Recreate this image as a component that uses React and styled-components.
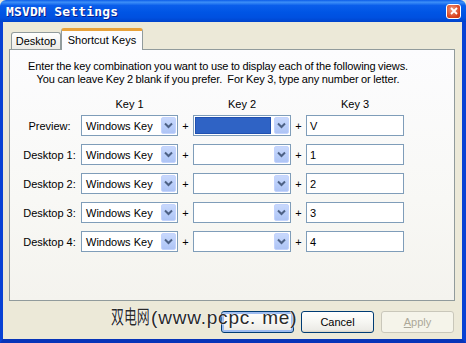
import React from "react";
import styled, { createGlobalStyle } from "styled-components";

const rows = [
  { label: "Preview:", key2Selected: true, key3: "V" },
  { label: "Desktop 1:", key3: "1" },
  { label: "Desktop 2:", key3: "2" },
  { label: "Desktop 3:", key3: "3" },
  { label: "Desktop 4:", key3: "4" },
];

function Chevron() {
  return (
    <svg width="9" height="7" viewBox="0 0 9 7">
      <polyline
        points="1,1.5 4.5,5 8,1.5"
        fill="none"
        stroke="#4D6185"
        strokeWidth="2"
      />
    </svg>
  );
}

function CloseIcon() {
  return (
    <svg width="8" height="8" viewBox="0 0 8 8">
      <path d="M1 1 L7 7 M7 1 L1 7" stroke="#fff" strokeWidth="1.8" />
    </svg>
  );
}

function Combo({ value, selected }) {
  return (
    <ComboBox>
      <ComboValue selected={selected}>{value}</ComboValue>
      <DropButton>
        <Chevron />
      </DropButton>
    </ComboBox>
  );
}

export default function App() {
  return (
    <>
      <GlobalStyle />
      <Window>
        <TitleBar>
          <Title>MSVDM Settings</Title>
          <CloseButton>
            <CloseIcon />
          </CloseButton>
        </TitleBar>
        <Frame>
          <Tabs>
            <Tab>Desktop</Tab>
            <Tab active>Shortcut Keys</Tab>
          </Tabs>
          <Panel>
            <Intro>
              Enter the key combination you want to use to display each of the
              following views.
              <br />
              You can leave Key 2 blank if you prefer.&nbsp; For Key 3, type any
              number or letter.
            </Intro>
            <HeaderGrid>
              <span />
              <ColHead>Key 1</ColHead>
              <span />
              <ColHead>Key 2</ColHead>
              <span />
              <ColHead>Key 3</ColHead>
            </HeaderGrid>
            <KeyGrid>
              {rows.map((r) => (
                <React.Fragment key={r.label}>
                  <RowLabel>{r.label}</RowLabel>
                  <Combo value="Windows Key" />
                  <Plus>+</Plus>
                  <Combo value="" selected={r.key2Selected} />
                  <Plus>+</Plus>
                  <TextBox>{r.key3}</TextBox>
                </React.Fragment>
              ))}
            </KeyGrid>
          </Panel>
          <ButtonRow>
            <Button focused />
            <Button>Cancel</Button>
            <Button disabled>
              <u>A</u>pply
            </Button>
          </ButtonRow>
          <Watermark>
            <Cjk>双电网</Cjk>(www.pcpc. me)
          </Watermark>
        </Frame>
      </Window>
    </>
  );
}

const GlobalStyle = createGlobalStyle`
  html, body {
    margin: 0;
    padding: 0;
    background: #ECE9D8;
  }
  body {
    font-family: "Liberation Sans", Tahoma, sans-serif;
    font-size: 11px;
    color: #000;
  }
`;

const Window = styled.div`
  width: 466px;
  height: 343px;
  display: flex;
  flex-direction: column;
  background: #ECE9D8;
  overflow: hidden;
`;

const TitleBar = styled.div`
  height: 22px;
  flex: none;
  display: flex;
  align-items: center;
  justify-content: space-between;
  padding: 0 5px 0 6px;
  box-sizing: border-box;
  border-radius: 6px 6px 0 0;
  background: linear-gradient(
    to bottom,
    #0B5CE8 0%,
    #3D8FF8 10%,
    #0A5EEB 25%,
    #0055E5 55%,
    #0050E0 80%,
    #0043CB 100%
  );
`;

const Title = styled.div`
  font-family: "DejaVu Sans Mono", "Liberation Mono", monospace;
  font-weight: bold;
  font-size: 13px;
  letter-spacing: 0.2px;
  color: #fff;
  text-shadow: 1px 1px 0 #0A1E8C;
`;

const CloseButton = styled.div`
  width: 13px;
  height: 13px;
  border: 1px solid #fff;
  border-radius: 3px;
  background: radial-gradient(circle at 40% 35%, #F09A7E, #D8401C 70%, #C23412);
  display: flex;
  align-items: center;
  justify-content: center;
`;

const Frame = styled.div`
  flex: 1;
  position: relative;
  display: flex;
  flex-direction: column;
  padding: 6px 7px 6px 6px;
  border-left: 3px solid #0841D4;
  border-right: 4px solid #0841D4;
  border-bottom: 4px solid #0734B8;
  box-sizing: border-box;
`;

const Tabs = styled.div`
  height: 21px;
  display: flex;
  align-items: flex-end;
  padding-left: 2px;
  position: relative;
  z-index: 1;
`;

const Tab = styled.div`
  width: ${(p) => (p.active ? "82px" : "50px")};
  height: ${(p) => (p.active ? "22px" : "17px")};
  box-sizing: border-box;
  display: flex;
  align-items: center;
  justify-content: center;
  border: 1px solid #919B9C;
  border-bottom: none;
  border-top: ${(p) => (p.active ? "3px solid #E9A23A" : "1px solid #919B9C")};
  border-radius: 3px 3px 0 0;
  background: ${(p) =>
    p.active ? "#FCFCFE" : "linear-gradient(to bottom, #FFFFFF, #ECEBE6)"};
  margin-bottom: ${(p) => (p.active ? "-1px" : "0")};
  padding-bottom: ${(p) => (p.active ? "2px" : "0")};
`;

const Panel = styled.div`
  height: 252px;
  flex: none;
  box-sizing: border-box;
  border: 1px solid #919B9C;
  background: linear-gradient(to bottom, #FCFCFE 0%, #F8F8F5 60%, #F4F3EE 100%);
  padding: 10px 0 0 8px;
`;

const Intro = styled.div`
  width: 400px;
  text-align: center;
  line-height: 13px;
  letter-spacing: -0.1px;
  word-spacing: -0.4px;
`;

const columns = "63px 97px 15px 98px 15px 98px";

const HeaderGrid = styled.div`
  display: grid;
  grid-template-columns: ${columns};
  margin-top: 11px;
  margin-bottom: 4px;
  line-height: 14px;
`;

const ColHead = styled.div`
  text-align: center;
`;

const KeyGrid = styled.div`
  display: grid;
  grid-template-columns: ${columns};
  grid-auto-rows: 21px;
  row-gap: 8px;
  align-items: center;
`;

const RowLabel = styled.div`
  text-align: center;
`;

const ComboBox = styled.div`
  height: 21px;
  box-sizing: border-box;
  border: 1px solid #7F9DB9;
  background: #fff;
  display: flex;
  align-items: center;
  padding: 1px;
`;

const ComboValue = styled.div`
  flex: 1;
  align-self: stretch;
  margin-right: 3px;
  display: flex;
  align-items: center;
  padding-left: 3px;
  background: ${(p) => (p.selected ? "#2F63C5" : "transparent")};
  box-shadow: ${(p) => (p.selected ? "inset 0 0 0 1px #2050B0" : "none")};
`;

const DropButton = styled.div`
  width: 15px;
  height: 17px;
  box-sizing: border-box;
  border-radius: 2px;
  border: 1px solid #C3D3FD;
  background: linear-gradient(to bottom, #C8D8FC 0%, #B8CDF9 60%, #AEC4F5 100%);
  display: flex;
  align-items: center;
  justify-content: center;
`;

const Plus = styled.div`
  text-align: center;
`;

const TextBox = styled.div`
  height: 21px;
  box-sizing: border-box;
  border: 1px solid #7F9DB9;
  background: #fff;
  display: flex;
  align-items: center;
  padding-left: 3px;
`;

const ButtonRow = styled.div`
  display: flex;
  justify-content: flex-end;
  gap: 7px;
  margin-top: 10px;
  margin-right: 1px;
`;

const Button = styled.div`
  width: 73px;
  height: 22px;
  box-sizing: border-box;
  border-radius: 3px;
  border: 1px solid ${(p) => (p.disabled ? "#C9C7BA" : "#003C74")};
  background: ${(p) =>
    p.disabled
      ? "#F5F4EA"
      : "linear-gradient(to bottom, #FFFFFF 0%, #F6F6F2 50%, #ECEBE6 90%, #D6D0C5 100%)"};
  color: ${(p) => (p.disabled ? "#ACA899" : "#000")};
  box-shadow: ${(p) => (p.focused ? "inset 0 0 0 2px #9DBBF0" : "none")};
  display: flex;
  align-items: center;
  justify-content: center;
`;

const Watermark = styled.div`
  position: absolute;
  left: 108px;
  top: 280px;
  font-family: "Liberation Sans", "Noto Sans CJK SC", sans-serif;
  font-size: 19px;
  letter-spacing: 0.8px;
  color: #2A2A2A;
  text-shadow: 0 0 2px #fff, 0 0 1px #fff;
  white-space: nowrap;
`;

const Cjk = styled.span`
  display: inline-block;
  font-family: "Noto Sans CJK SC", sans-serif;
  letter-spacing: 0;
  transform: scaleX(0.68);
  transform-origin: left center;
  margin-right: -17px;
`;
